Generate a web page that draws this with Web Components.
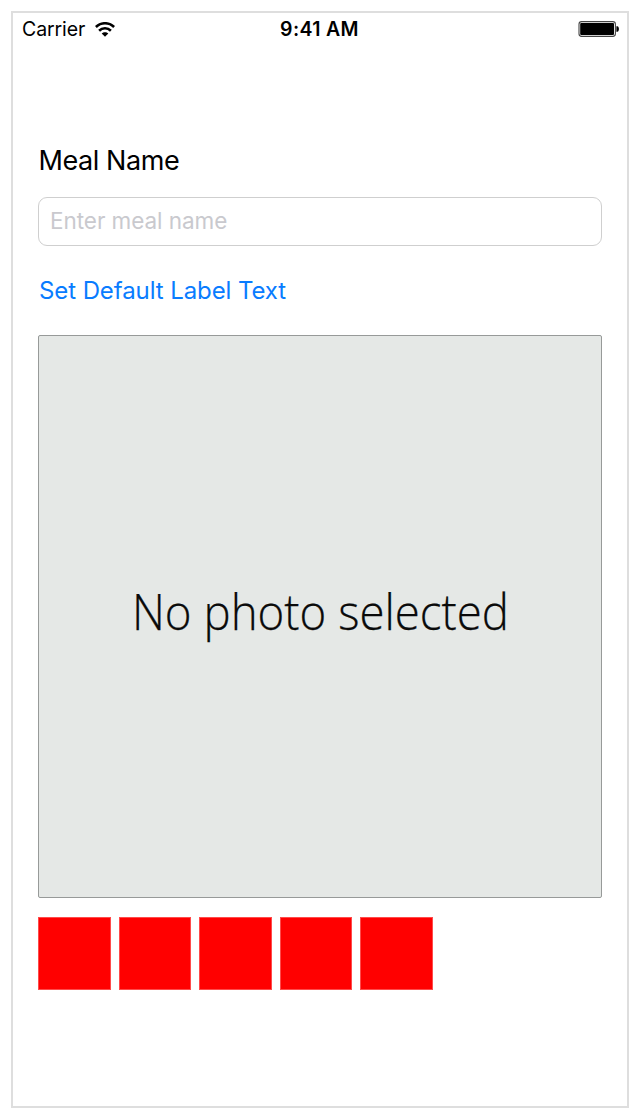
<!DOCTYPE html>
<html lang="en">
<head>
<meta charset="utf-8">
<title>Meal</title>
<style>
html, body { margin: 0; background: #fff; }
body { font-family: Inter, "Liberation Sans", sans-serif; color: #000; box-sizing: border-box; width: 640px; height: 1119px; padding: 11px; overflow: hidden; }
</style>
</head>
<body>
<phone-screen>
  <status-bar slot="status" carrier="Carrier" time="9:41 AM"></status-bar>
  <meal-label>Meal Name</meal-label>
  <text-field placeholder="Enter meal name"></text-field>
  <link-button>Set Default Label Text</link-button>
  <photo-view>No photo selected</photo-view>
  <rating-control count="5"></rating-control>
</phone-screen>
<script>
class BaseElement extends HTMLElement {
  connectedCallback() {
    if (!this.shadowRoot) this.attachShadow({ mode: "open" }).innerHTML = this.view();
  }
}

customElements.define("phone-screen", class extends BaseElement {
  view() {
    return `<style>
      :host { display: flex; flex-direction: column; box-sizing: border-box; width: 618px; height: 1097px; border: 2px solid #dedede; }
      main { display: flex; flex-direction: column; align-items: flex-start; padding: 101px 25px 0; }
    </style><slot name="status"></slot><main><slot></slot></main>`;
  }
});

customElements.define("status-bar", class extends BaseElement {
  view() {
    return `<style>
      :host { display: grid; grid-template-columns: 1fr auto 1fr; align-items: center; height: 32px; padding: 0 8px 0 9px; line-height: 32px; }
      .left { display: flex; align-items: center; gap: 9.8px; }
      .carrier { font-size: 19.5px; letter-spacing: -.1px; }
      .time { font-weight: 600; font-size: 19.5px; letter-spacing: .35px; margin-left: -2px; }
      .battery { justify-self: end; }
      svg { display: block; }
    </style>
    <div class="left"><span class="carrier">${this.getAttribute("carrier")}</span>
      <svg width="20" height="15" viewBox="0 0 20 15"><g fill="none" stroke="#000" stroke-width="2.6"><path d="M.9 5C6 0 14 0 19.1 5"/><path d="M4.1 8.7c3.3-3.2 8.5-3.2 11.8 0"/></g><path d="M10 14.8 6.7 11.5c1.8-1.8 4.8-1.8 6.6 0Z"/></svg>
    </div>
    <span class="time">${this.getAttribute("time")}</span>
    <svg class="battery" width="41" height="16" viewBox="0 0 41 16"><rect x="1" y=".6" width="36.4" height="14.8" rx="2.6" fill="#fff" stroke="#444" stroke-width="1.1"/><rect x="2.2" y="2" width="33.8" height="12" rx="1"/><path d="M38.4 5.2h1c2 .5 2 5.1 0 5.6h-1Z"/></svg>`;
  }
});

customElements.define("meal-label", class extends BaseElement {
  view() {
    return `<style>:host { display: block; height: 30px; line-height: 30px; margin-left: .5px; font-size: 27px; letter-spacing: -.42px; white-space: nowrap; }</style><slot></slot>`;
  }
});

customElements.define("text-field", class extends BaseElement {
  view() {
    return `<style>
      :host { display: block; margin-top: 21px; }
      input { display: block; box-sizing: border-box; width: 564px; height: 49px; padding: 0 11px 2px; border: 1px solid #cfcfcf; border-radius: 9px; background: #fff; font: 22.5px Inter, sans-serif; letter-spacing: -.05px; outline: none; }
      input::placeholder { color: #c9c9ce; opacity: 1; }
    </style><input type="text" placeholder="${this.getAttribute("placeholder")}">`;
  }
});

customElements.define("link-button", class extends BaseElement {
  view() {
    return `<style>
      :host { display: block; margin: 30px 0 0 1px; }
      button { display: block; padding: 0; border: 0; background: none; color: #097cff; font: 24px/30px Inter, sans-serif; letter-spacing: -.09px; height: 30px; white-space: nowrap; }
    </style><button type="button"><slot></slot></button>`;
  }
});

customElements.define("photo-view", class extends BaseElement {
  view() {
    return `<style>
      :host { display: flex; align-items: center; justify-content: center; box-sizing: border-box; width: 564px; height: 563px; margin-top: 29px; padding-bottom: 11px; border: 1px solid #979a99; border-radius: 2px; background: #e5e8e6; }
      span { display: block; font: 300 49px/60px "Open Sans", "Noto Sans", sans-serif; color: #0a0a0a; white-space: nowrap; transform: scaleX(.931); -webkit-text-stroke: .25px #0a0a0a; }
    </style><span><slot></slot></span>`;
  }
});

customElements.define("rating-control", class extends BaseElement {
  view() {
    const n = Number(this.getAttribute("count"));
    return `<style>
      :host { display: flex; gap: 8px; margin-top: 19px; }
      i { display: block; box-sizing: border-box; width: 72.5px; height: 73px; background: #f00; border: 1px solid #ff4b4b; }
    </style>${"<i></i>".repeat(n)}`;
  }
});
</script>
</body>
</html>
